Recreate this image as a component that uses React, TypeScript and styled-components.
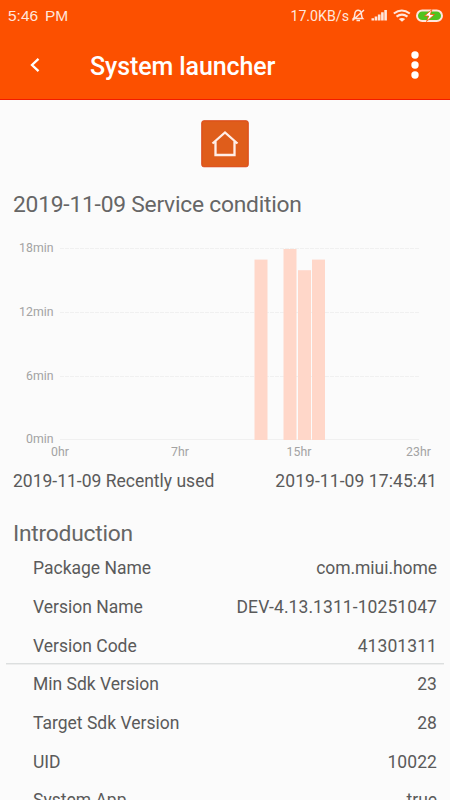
import React from 'react';
import styled, { createGlobalStyle } from 'styled-components';

const Global = createGlobalStyle`
  * { box-sizing: border-box; }
  html, body { margin: 0; background: #fbfbfb; overflow: hidden; }
  body { font-family: Roboto, "Liberation Sans", sans-serif; color: #5a5a5a; }
`;

const Screen = styled.main`
  display: flex;
  flex-direction: column;
  width: 450px;
  height: 800px;
  overflow: hidden;
  background: #fbfbfb;
`;

const Header = styled.header`
  height: 100px;
  flex: none;
  background: #fc5000;
  border-bottom: 1px solid #f21b00;
  color: #fff;
`;

const StatusBar = styled.div`
  display: flex;
  align-items: center;
  justify-content: space-between;
  height: 32px;
  padding: 0 7px 0 8px;
  color: #ffe6dc;
`;

const Clock = styled.span`
  font: 15.5px/32px "Liberation Sans", Arial, sans-serif;
  word-spacing: 2.5px;
`;

const StatusGroup = styled.div`
  display: flex;
  align-items: center;
  height: 32px;
`;

const Speed = styled.span`
  font-size: 14.2px;
  line-height: 32px;
`;

const StatusIcons = styled.svg`
  display: block;
  width: 94px;
  height: 32px;
`;

const Toolbar = styled.div`
  display: flex;
  align-items: center;
  height: 67px;
  padding: 0 27px;
`;

const Title = styled.h1`
  flex: 1;
  margin: 2px 0 0 47px;
  font-size: 25px;
  font-weight: 500;
  line-height: 32px;
  letter-spacing: -0.1px;
`;

const BarIcon = styled.svg<{ $width: number }>`
  display: block;
  flex: none;
  width: ${(p) => p.$width}px;
  height: 67px;
`;

const AppIcon = styled.svg`
  display: block;
  width: 48px;
  height: 48px;
  margin: 20px 0 0 201px;
  flex: none;
`;

const Heading = styled.h2<{ $top: number }>`
  flex: none;
  margin: ${(p) => p.$top}px 0 0 13px;
  font-size: 22.8px;
  font-weight: 400;
  line-height: 30px;
  letter-spacing: -0.23px;
  color: #666;
`;

const Chart = styled.svg`
  display: block;
  flex: none;
  width: 450px;
  height: 228px;
  margin-top: 14px;
  font-size: 12.3px;
  fill: #a3a3a3;
`;

const Row = styled.div<{ $indent: number; $height: number }>`
  display: flex;
  flex: none;
  align-items: center;
  justify-content: space-between;
  height: ${(p) => p.$height}px;
  padding: 0 13px 0 ${(p) => p.$indent}px;
  font-size: 17.5px;
  line-height: 24px;
  white-space: nowrap;
`;

const Value = styled.span<{ $spaced: boolean }>`
  letter-spacing: ${(p) => (p.$spaced ? '0.08px' : '-0.05px')};
`;

const Details = styled.section`
  position: relative;
  flex: none;
`;

const Divider = styled.hr`
  position: absolute;
  top: 114px;
  left: 6px;
  right: 6px;
  height: 1px;
  margin: 0;
  border: 0;
  background: #dcdfdf;
  box-shadow: 0 1px #eeeeee;
`;

const bars = [
  { x: 254.5, minutes: 17 },
  { x: 283.5, minutes: 18 },
  { x: 298, minutes: 16 },
  { x: 312, minutes: 17 },
];

const baseline = 206;
const perMinute = 191 / 18;
const ticks = [
  { label: '18min', y: 14.5 },
  { label: '12min', y: 78.5 },
  { label: '6min', y: 142 },
  { label: '0min', y: 205.5 },
];
const hours = [
  { label: '0hr', x: 60 },
  { label: '7hr', x: 180 },
  { label: '15hr', x: 299 },
  { label: '23hr', x: 418.5 },
];

const details = [
  ['Package Name', 'com.miui.home'],
  ['Version Name', 'DEV-4.13.1311-10251047'],
  ['Version Code', '41301311'],
  ['Min Sdk Version', '23'],
  ['Target Sdk Version', '28'],
  ['UID', '10022'],
  ['System App', 'true'],
];

export default function App() {
  return (
    <>
      <Global />
      <Screen>
        <Header>
          <StatusBar>
            <Clock>5:46 PM</Clock>
            <StatusGroup>
              <Speed>17.0KB/s</Speed>
              <StatusIcons viewBox="349 0 94 32" fill="none" stroke="#ffe6dc">
                <path d="M353.500 18.500c2-2 .5-5.500 2.300-7.300q2.200-2 4.600 0c1.800 1.800.3 5.300 2.300 7.300zM356.500 20.500h3.500M352.500 20.500l11.500-10.500" strokeWidth="1.500" />
                <g fill="#ffe6dc" stroke="none">
                  <path d="M371.500 18.200h2.600v2.300h-2.600zM374.700 16.400h2.600v4.100h-2.600zM377.900 14.400h2.600v6.100h-2.600zM381.100 12.200h2.600v8.300h-2.600zM384.300 10h2.600v10.500h-2.600z" />
                </g>
                <path d="M393.800 13.500q8-6 16 0M396.500 16.700q5.500-4.200 11 0" strokeWidth="2.100" />
                <path d="M398.800 19q3.200-2.200 6.400 0l-3.200 2.800z" fill="#ffe6dc" stroke="none" />
                <rect x="417" y="10.500" width="25" height="10.500" rx="5.250" fill="#4fc31e" strokeWidth="2" />
                <path d="M432 9.500l-7.500 6.500h4.200l-2.200 5.500 8-7h-4.200z" fill="#fff" stroke="#fc5000" strokeWidth=".8" />
              </StatusIcons>
            </StatusGroup>
          </StatusBar>
          <Toolbar>
            <BarIcon $width={16} viewBox="27 32 16 67" fill="none" stroke="#fff" strokeWidth="2.300">
              <path d="M38.500 58.800l-6.500 6.200 6.500 6.200" />
            </BarIcon>
            <Title>System launcher</Title>
            <BarIcon $width={16} viewBox="407 32 16 67" fill="#fff">
              <circle cx="415" cy="55" r="3.700" />
              <circle cx="415" cy="65" r="3.700" />
              <circle cx="415" cy="75" r="3.700" />
            </BarIcon>
          </Toolbar>
        </Header>
        <AppIcon viewBox="0 0 48 48">
          <rect x=".75" y=".75" width="46.500" height="46" rx="2" fill="#df5d1b" stroke="#db4515" />
          <path d="M11.500 23.500L24 12.500l12.500 11M14.500 21.500V35h19V21.500" fill="none" stroke="#ffeee8" strokeWidth="2.300" />
        </AppIcon>
        <Heading $top={22}>2019-11-09 Service condition</Heading>
        <Chart viewBox="0 0 450 228">
          {ticks.map((tick, i) => (
            <g key={tick.label}>
              <text x="53.500" y={tick.y + 3.500} textAnchor="end">{tick.label}</text>
              <path d={`M60 ${Math.floor(tick.y) + 0.5}H419`} stroke="#f0f0f0" strokeDasharray={i === 3 ? undefined : '4 1'} />
            </g>
          ))}
          {bars.map((bar) => (
            <rect key={bar.x} x={bar.x} y={baseline - bar.minutes * perMinute} width="13" height={bar.minutes * perMinute} fill="#ffd7c9" />
          ))}
          {hours.map((hour) => (
            <text key={hour.label} x={hour.x} y="222" textAnchor="middle">{hour.label}</text>
          ))}
        </Chart>
        <Row $indent={13} $height={38}>
          <span>2019-11-09 Recently used</span>
          <Value $spaced>2019-11-09 17:45:41</Value>
        </Row>
        <Heading $top={19}>Introduction</Heading>
        <Details>
          {details.map(([label, value]) => (
            <Row key={label} $indent={33} $height={38.7}>
              <span>{label}</span>
              <Value $spaced={/\d/.test(value)}>{value}</Value>
            </Row>
          ))}
          <Divider />
        </Details>
      </Screen>
    </>
  );
}
